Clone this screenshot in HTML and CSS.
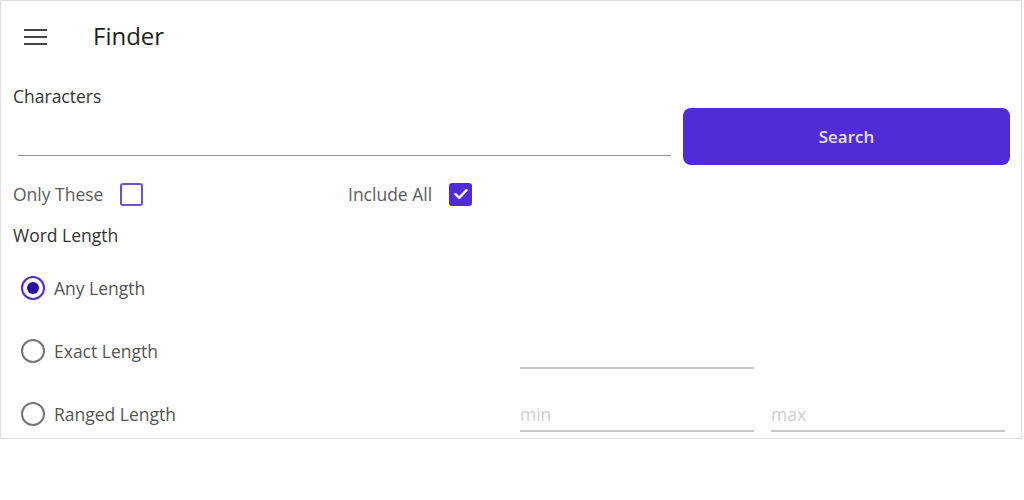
FILE: index.html
```html
<!DOCTYPE html>
<html>
<head>
<meta charset="utf-8">
<link rel="stylesheet" href="styles.css">
</head>
<body>
<div class="window">
  <header class="appbar">
    <svg class="menu" width="24" height="18" viewBox="0 0 24 18">
      <rect x="0" y="1" width="23" height="2" fill="#444"/>
      <rect x="0" y="8" width="23" height="2" fill="#444"/>
      <rect x="0" y="15" width="23" height="2" fill="#444"/>
    </svg>
    <h1 class="title">Finder</h1>
  </header>
  <main class="form">
    <div class="top-row">
      <div class="chars">
        <div class="label">Characters</div>
        <div class="entry entry-main"></div>
      </div>
      <button class="search">Search</button>
    </div>
    <div class="check-row">
      <div class="check-group first">
        <span class="check-label">Only These</span>
        <span class="box"></span>
      </div>
      <div class="check-group">
        <span class="check-label">Include All</span>
        <span class="box checked">
          <svg width="14" height="12" viewBox="0 0 14 12"><path d="M1.5 6.2 L5.2 9.8 L12.5 2.2" fill="none" stroke="#fff" stroke-width="2.4" stroke-linecap="round" stroke-linejoin="round"/></svg>
        </span>
      </div>
    </div>
    <div class="label section">Word Length</div>
    <div class="radio-row">
      <div class="radio-cell"><span class="radio on"></span><span class="radio-label">Any Length</span></div>
    </div>
    <div class="radio-row">
      <div class="radio-cell"><span class="radio"></span><span class="radio-label">Exact Length</span></div>
      <div class="entry entry-small"></div>
    </div>
    <div class="radio-row">
      <div class="radio-cell"><span class="radio"></span><span class="radio-label">Ranged Length</span></div>
      <div class="entry entry-small"><span class="ph">min</span></div>
      <div class="entry entry-small"><span class="ph">max</span></div>
    </div>
  </main>
</div>
</body>
</html>
```

FILE: styles.css
```css
* { box-sizing: border-box; }
html, body {
  margin: 0;
  padding: 0;
  background: #fff;
  font-family: "Open Sans", "Noto Sans", sans-serif;
}
.window {
  width: 1022px;
  height: 439px;
  border: 1px solid #dedede;
  overflow: hidden;
  background: #fff;
}
.appbar {
  height: 73px;
  display: flex;
  align-items: center;
  padding-left: 23px;
}
.menu { display: block; margin-top: -1px; }
.title {
  margin: -3px 0 0 45px;
  font-size: 24px;
  font-weight: 400;
  color: #1f1f1f;
  line-height: 30px;
}
.form {
  padding: 12px 11px 0 12px;
}
.top-row {
  display: flex;
  gap: 12px;
}
.chars {
  flex: 1;
  display: flex;
  flex-direction: column;
}
.label {
  font-size: 17.5px;
  line-height: 20px;
  color: #333;
}
.entry {
  border-bottom: 1px solid #8f8f8f;
}
.entry-main {
  height: 50px;
  margin-left: 5px;
}
.search {
  width: 327px;
  height: 57px;
  margin-top: 22px;
  border: none;
  border-radius: 8px;
  background: #512bd4;
  color: #e6e1fa;
  font-family: "Open Sans", "Noto Sans", sans-serif;
  font-size: 17px;
  font-weight: 600;
  padding: 0;
}
.check-row {
  display: flex;
  align-items: center;
  height: 36px;
  margin-top: 11px;
}
.check-group {
  display: flex;
  align-items: center;
  gap: 17px;
}
.check-group.first { width: 335px; }
.check-label {
  font-size: 17.5px;
  color: #5c5c5c;
}
.box {
  width: 23px;
  height: 23px;
  border: 2px solid #6e4fdc;
  border-radius: 3px;
  display: flex;
  align-items: center;
  justify-content: center;
}
.box.checked {
  background: #512bd4;
  border-color: #512bd4;
}
.section {
  margin-top: 12px;
  line-height: 22px;
}
.radio-row {
  height: 63px;
  display: flex;
  align-items: center;
  gap: 17px;
}
.section + .radio-row { margin-top: 10px; }
.radio-cell {
  width: 490px;
  display: flex;
  align-items: center;
  padding-left: 8px;
}
.radio {
  width: 24px;
  height: 24px;
  border: 2px solid #767676;
  border-radius: 50%;
  display: flex;
  align-items: center;
  justify-content: center;
}
.radio.on { border-color: #512bd4; }
.radio.on::after {
  content: "";
  width: 12px;
  height: 12px;
  border-radius: 50%;
  background: #2a0f9e;
}
.radio-label {
  margin-left: 9px;
  font-size: 17.5px;
  color: #555;
}
.entry-small {
  width: 234px;
  height: 36px;
  border-bottom: 2px solid #c8c8c8;
  display: flex;
  align-items: center;
  padding-top: 2px;
}
.ph {
  font-size: 17.5px;
  color: #cfcfcf;
}
```
